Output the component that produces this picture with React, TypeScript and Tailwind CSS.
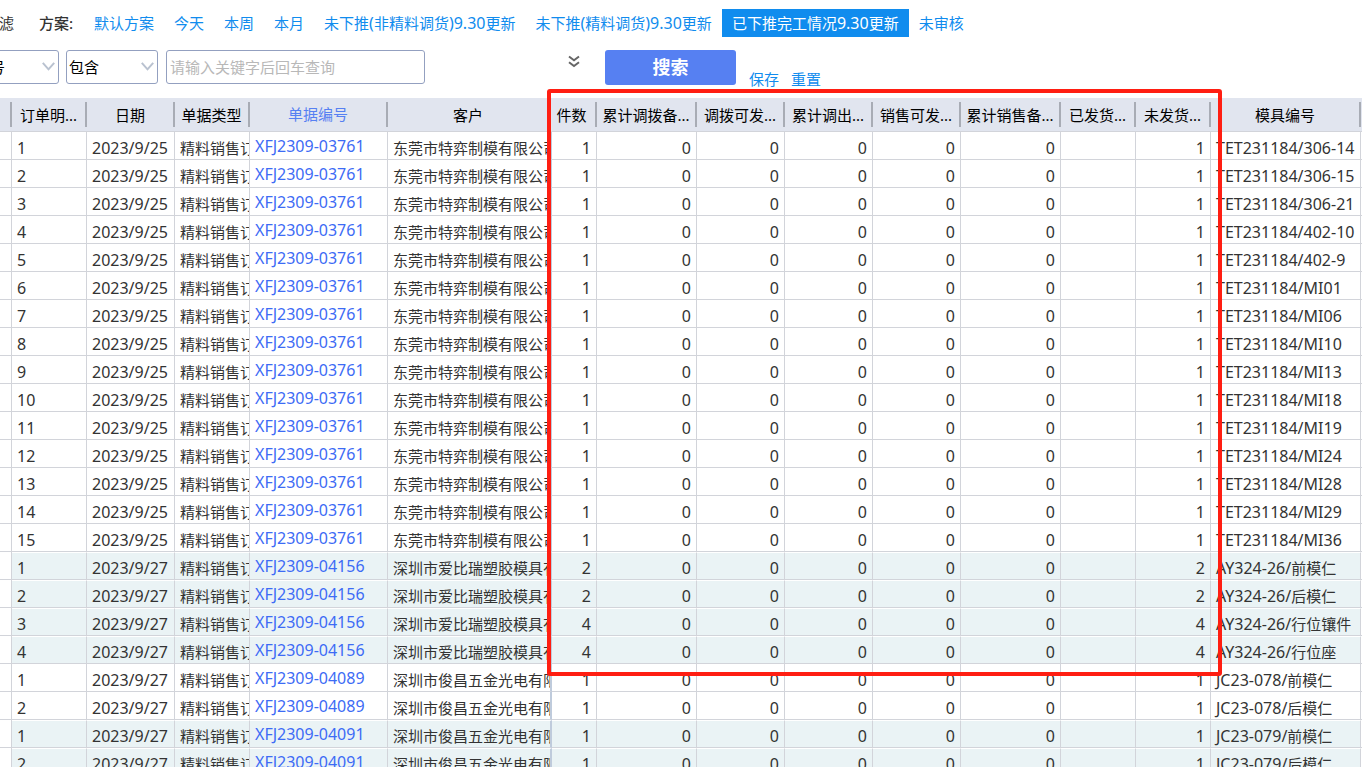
import React from "react";

type Align = "left" | "right";
type Row = {
  line: number;
  date: string;
  order: string;
  customer: string;
  qty: number;
  mold: string;
  tinted: boolean;
};

const columns: { title: string; width: string; link?: boolean; frozenEdge?: boolean }[] = [
  { title: "", width: "w-[12px]" },
  { title: "订单明...", width: "w-[75px]" },
  { title: "日期", width: "w-[88px]" },
  { title: "单据类型", width: "w-[75px]" },
  { title: "单据编号", width: "w-[138px]", link: true },
  { title: "客户", width: "w-[164px]", frozenEdge: true },
  { title: "件数", width: "w-[45px]" },
  { title: "累计调拨备...", width: "w-[100px]" },
  { title: "调拨可发...", width: "w-[88px]" },
  { title: "累计调出...", width: "w-[88px]" },
  { title: "销售可发...", width: "w-[88px]" },
  { title: "累计销售备...", width: "w-[100px]" },
  { title: "已发货...", width: "w-[75px]" },
  { title: "未发货...", width: "w-[75px]" },
  { title: "模具编号", width: "w-[150px]" },
];

const firstOrderMolds = [
  "306-14", "306-15", "306-21", "402-10", "402-9", "MI01", "MI06", "MI10",
  "MI13", "MI18", "MI19", "MI24", "MI28", "MI29", "MI36",
];

function buildRows(
  date: string,
  order: string,
  customer: string,
  tinted: boolean,
  items: [number, string][],
): Row[] {
  return items.map(([qty, mold], i) => ({ line: i + 1, date, order, customer, qty, mold, tinted }));
}

const rows: Row[] = [
  ...buildRows("2023/9/25", "XFJ2309-03761", "东莞市特弈制模有限公司", false,
    firstOrderMolds.map((m): [number, string] => [1, `TET231184/${m}`])),
  ...buildRows("2023/9/27", "XFJ2309-04156", "深圳市爱比瑞塑胶模具有", true, [
    [2, "AY324-26/前模仁"],
    [2, "AY324-26/后模仁"],
    [4, "AY324-26/行位镶件"],
    [4, "AY324-26/行位座"],
  ]),
  ...buildRows("2023/9/27", "XFJ2309-04089", "深圳市俊昌五金光电有限", false, [
    [1, "JC23-078/前模仁"],
    [1, "JC23-078/后模仁"],
  ]),
  ...buildRows("2023/9/27", "XFJ2309-04091", "深圳市俊昌五金光电有限", true, [
    [1, "JC23-079/前模仁"],
    [1, "JC23-079/后模仁"],
  ]),
];

const plans = [
  "默认方案", "今天", "本周", "本月", "未下推(非精料调货)9.30更新",
  "未下推(精料调货)9.30更新", "已下推完工情况9.30更新", "未审核",
];

/* Latin runs are set one step larger than the Chinese text around them. */
function Mixed({ text }: { text: string }) {
  return (
    <>
      {text.split(/([ -~]+)/).filter(Boolean).map((run, i) =>
        /^[ -~]/.test(run) ? <span key={i} className="text-[16px]">{run}</span> : run,
      )}
    </>
  );
}

function Picker({ label, value, className }: { label: string; value: string; className: string }) {
  return (
    <div className={`relative shrink-0 ${className}`}>
      <select
        aria-label={label}
        defaultValue={value}
        className="h-[34px] w-full appearance-none rounded-[3px] border border-[#93a0c0] bg-white pl-[2px] text-[15px] text-black"
      >
        <option>{value}</option>
      </select>
      <svg
        className="pointer-events-none absolute right-[4px] top-[12px]"
        width="13" height="9" viewBox="0 0 13 9" fill="none" stroke="#b9c2d0" strokeWidth="2"
      >
        <path d="M0.8 0.8 L6.5 7.3 L12.2 0.8" />
      </svg>
    </div>
  );
}

function Cell({ align = "left", edge = false, tinted, children }: {
  align?: Align;
  edge?: boolean;
  tinted: boolean;
  children?: React.ReactNode;
}) {
  const alignment = align === "right" ? "text-right" : "text-left";
  const border = edge ? "border-r-2 border-r-[#bfcbdc]" : "border-r border-r-[#d2d4da]";
  const fill = tinted ? "border-t border-t-white bg-[#eaf3f5]" : "";
  return (
    <td className={`h-[28px] overflow-hidden whitespace-nowrap border-b border-b-[#d2d4da] p-0 align-top ${border} ${fill} ${alignment}`}>
      <div className={`h-[26px] overflow-hidden pl-[5px] leading-[32px] ${align === "right" ? "pr-[5px]" : ""} ${tinted ? "-mt-px" : ""}`}>
        {children}
      </div>
    </td>
  );
}

export default function App() {
  return (
    <main className="h-screen overflow-hidden bg-white font-['Noto_Sans','Noto_Sans_CJK_SC',sans-serif] text-[15px] text-[#333]">
      <nav className="flex h-[46px] items-start pt-[9px] leading-[28px] whitespace-nowrap">
        <span className="-ml-[16px] w-[55px]">过滤</span>
        <span className="w-[45px] font-medium">方案:</span>
        {plans.map((plan) => (
          <button
            key={plan}
            type="button"
            className={`h-[28px] px-[10px] ${plan.startsWith("已") ? "bg-[#108cee] text-white" : "text-[#108cee]"}`}
          >
            <Mixed text={plan} />
          </button>
        ))}
      </nav>

      <form className="flex h-[52px] items-start pt-[4px]" onSubmit={(e) => e.preventDefault()}>
        <Picker label="字段" value="单据编号" className="-ml-[58px] w-[117px]" />
        <Picker label="条件" value="包含" className="ml-[7px] w-[92px]" />
        <input
          type="text"
          aria-label="关键字"
          placeholder="请输入关键字后回车查询"
          className="ml-[8px] h-[34px] w-[259px] rounded-[3px] border border-[#93a0c0] px-[3px] text-[15px] placeholder:text-[#b8b8b8]"
        />
        <button type="button" aria-label="展开" className="ml-[142px] mt-[5px] h-[14px] w-[14px]">
          <svg width="14" height="14" viewBox="0 0 14 14" fill="none" stroke="#666" strokeWidth="2">
            <path d="M2 1.5 L7 5.2 L12 1.5 M2 7.2 L7 11 L12 7.2" />
          </svg>
        </button>
        <button type="submit" className="ml-[24px] h-[35px] w-[131px] rounded-[3px] bg-[#5680f2] text-[18px] font-bold text-white">
          搜索
        </button>
        <a href="#save" className="ml-[13px] mt-[18px] leading-[22px] text-[#108cee]">保存</a>
        <a href="#reset" className="ml-[12px] mt-[18px] leading-[22px] text-[#108cee]">重置</a>
      </form>

      <section className="relative">
        <table className="w-full table-fixed border-separate border-spacing-0">
          <colgroup>
            {columns.map((c, i) => <col key={i} className={c.width} />)}
            <col />
          </colgroup>
          <thead>
            <tr className="bg-[#e1e5ef]">
              {columns.map((c, i) => (
                <th key={i} scope="col" className="h-[34px] border-b border-[#d2d4da] p-0 align-top font-normal">
                  <div className={`mt-[4px] h-[25px] overflow-hidden whitespace-nowrap ${c.link ? "leading-[24px] text-[#5680f2]" : "leading-[26px] text-black"} ${c.frozenEdge ? "pr-[4px]" : "border-r-2 border-r-[#a8acb5]"} ${c.title === "件数" ? "pr-[4px]" : ""}`}>
                    {c.title}
                  </div>
                </th>
              ))}
              <td className="border-b border-[#d2d4da] p-0" />
            </tr>
          </thead>
          <tbody>
            {rows.map((r, i) => (
              <tr key={i}>
                <Cell tinted={false} />
                <Cell tinted={r.tinted}><Mixed text={String(r.line)} /></Cell>
                <Cell tinted={r.tinted}><Mixed text={r.date} /></Cell>
                <Cell tinted={r.tinted}>精料销售订</Cell>
                <Cell tinted={r.tinted}>
                  <a href={`#${r.order}`} className="block leading-[29px] text-[#3d6bf5]"><Mixed text={r.order} /></a>
                </Cell>
                <Cell tinted={r.tinted} edge>{r.customer}</Cell>
                <Cell tinted={r.tinted} align="right"><Mixed text={String(r.qty)} /></Cell>
                {[0, 1, 2, 3, 4].map((k) => (
                  <Cell key={k} tinted={r.tinted} align="right"><Mixed text="0" /></Cell>
                ))}
                <Cell tinted={r.tinted} />
                <Cell tinted={r.tinted} align="right"><Mixed text={String(r.qty)} /></Cell>
                <Cell tinted={r.tinted}><Mixed text={r.mold} /></Cell>
                <td className="border-b border-[#d2d4da] p-0" />
              </tr>
            ))}
          </tbody>
        </table>
        <div className="pointer-events-none absolute -top-[9px] left-[547px] h-[587px] w-[675px] rounded-[3px] border-4 border-[#ff1e12]" />
      </section>
    </main>
  );
}
